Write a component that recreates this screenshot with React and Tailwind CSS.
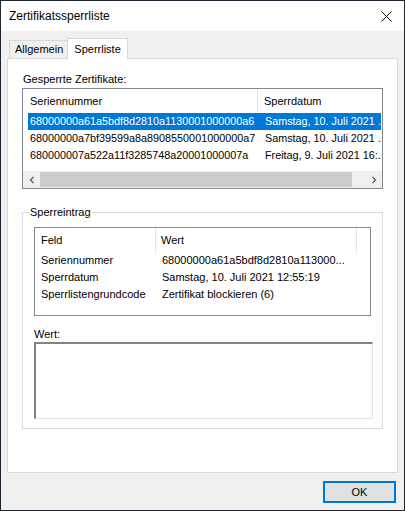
import React from 'react';

const font = { fontFamily: '"Liberation Sans", Arial, sans-serif' };

const certs = [
  { serial: '68000000a61a5bdf8d2810a1130001000000a6', date: 'Samstag, 10. Juli 2021 ..', selected: true },
  { serial: '68000000a7bf39599a8a8908550001000000a7', date: 'Samstag, 10. Juli 2021 ..' },
  { serial: '680000007a522a11f3285748a20001000007a', date: 'Freitag, 9. Juli 2021 16:..' },
];

const fields = [
  { name: 'Seriennummer', value: '68000000a61a5bdf8d2810a113000...' },
  { name: 'Sperrdatum', value: 'Samstag, 10. Juli 2021 12:55:19' },
  { name: 'Sperrlistengrundcode', value: 'Zertifikat blockieren (6)' },
];

const Chevron = ({ dir }) => (
  <svg width="8" height="8" viewBox="0 0 8 8">
    <path
      d={dir === 'left' ? 'M5.5 1 L2.5 4 L5.5 7' : 'M2.5 1 L5.5 4 L2.5 7'}
      fill="none"
      stroke="#606060"
      strokeWidth="1.4"
    />
  </svg>
);

export default function App() {
  return (
    <div className="w-[405px] h-[511px] bg-[#1c2630] pt-[1px] px-[1px] pb-[1px] text-[11px] text-black" style={font}>
      <div className="h-full flex flex-col bg-[#f0f0f0]">
        {/* Title bar */}
        <div className="h-[30px] bg-white flex items-center justify-between pl-[8px] pr-[12px]">
          <span className="text-[12px] leading-none">Zertifikatssperrliste</span>
          <svg width="11" height="11" viewBox="0 0 11 11">
            <path d="M0.5 0.5 L10.5 10.5 M10.5 0.5 L0.5 10.5" stroke="#111" strokeWidth="1" />
          </svg>
        </div>

        {/* Tabs */}
        <div className="flex items-end h-[27px] pl-[8px] pt-[7px]">
          <div className="h-[18px] pl-[5px] pr-[4px] border border-b-0 border-[#d9d9d9] bg-[#f0f0f0] flex items-center leading-none">
            Allgemein
          </div>
          <div className="h-[21px] -ml-[1px] -mb-[1px] px-[6px] border border-b-0 border-[#d9d9d9] bg-white flex items-center leading-none relative z-10">
            Sperrliste
          </div>
        </div>

        {/* Panel */}
        <div className="mx-[6px] h-[415px] border border-[#d9d9d9] bg-white px-[14px] pt-[12px]">
          <div className="leading-[16px] pl-[1px]">Gesperrte Zertifikate:</div>

          <div className="mt-[1px] h-[101px] border border-[#828790] flex flex-col">
            <div className="h-[24px] flex shrink-0">
              <div className="w-[235px] pl-[7px] flex items-center border-r border-[#e5e5e5]">Seriennummer</div>
              <div className="flex-1 pl-[6px] flex items-center">Sperrdatum</div>
            </div>
            <div className="pl-[5px] pr-[1px] text-[10.8px]">
              {certs.map((c) => (
                <div
                  key={c.serial}
                  className={`h-[17px] flex items-center whitespace-nowrap overflow-hidden ${
                    c.selected ? 'bg-[#0078d7] text-white' : ''
                  }`}
                >
                  <div className="w-[230px] pl-[2px] shrink-0">{c.serial}</div>
                  <div className="pl-[7px]">{c.date}</div>
                </div>
              ))}
            </div>
            <div className="mt-auto h-[17px] flex bg-[#f0f0f0] shrink-0">
              <div className="w-[17px] flex items-center justify-center">
                <Chevron dir="left" />
              </div>
              <div className="flex-1 flex items-center">
                <div className="w-[312px] h-[15px] bg-[#cdcdcd]" />
              </div>
              <div className="w-[17px] flex items-center justify-center">
                <Chevron dir="right" />
              </div>
            </div>
          </div>

          {/* Group box */}
          <div className="relative mt-[23px] h-[217px] border border-[#dcdcdc] px-[11px] pt-[14px]">
            <span className="absolute -top-[9px] left-[6px] bg-white px-[1px] leading-[16px]">Sperreintrag</span>

            <div className="h-[89px] border border-[#828790] flex flex-col">
              <div className="h-[24px] flex shrink-0">
                <div className="w-[121px] pl-[6px] flex items-center border-r border-[#e5e5e5]">Feld</div>
                <div className="w-[201px] pl-[5px] flex items-center border-r border-[#e5e5e5]">Wert</div>
              </div>
              {fields.map((f) => (
                <div key={f.name} className="h-[17px] flex items-center whitespace-nowrap">
                  <div className="w-[121px] pl-[6px] shrink-0">{f.name}</div>
                  <div className="pl-[6px]">{f.value}</div>
                </div>
              ))}
            </div>

            <div className="mt-[10px] leading-[16px]">Wert:</div>
            <div className="h-[77px] w-[339px] border-t-2 border-l-2 border-t-[#838383] border-l-[#838383] border-r border-b border-r-[#e3e3e3] border-b-[#e3e3e3] bg-white" />
          </div>
        </div>

        {/* Footer */}
        <div className="flex justify-end pr-[8px] pt-[8px]">
          <button className="w-[73px] h-[22px] border-2 border-[#0078d7] bg-[#e1e1e1] flex items-center justify-center leading-none">
            OK
          </button>
        </div>
      </div>
    </div>
  );
}
